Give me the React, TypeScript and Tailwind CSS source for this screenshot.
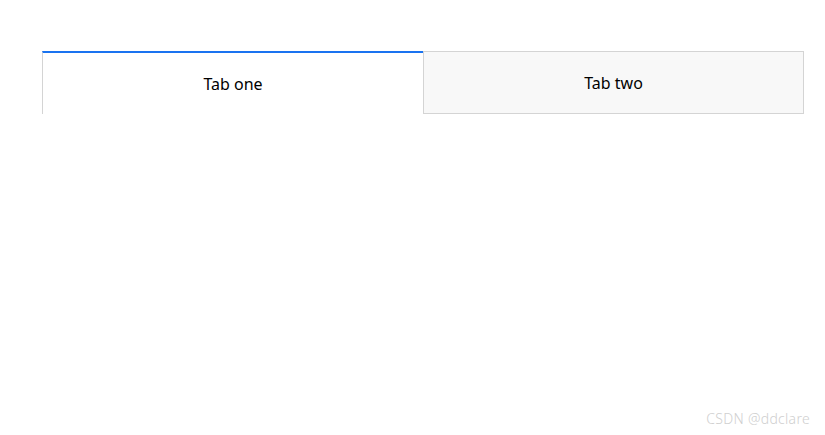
import { useState } from 'react';

const tabs = ['Tab one', 'Tab two'];

export default function App() {
  const [active, setActive] = useState(0);

  return (
    <div
      className="flex h-[435px] w-[825px] flex-col bg-white"
      style={{ fontFamily: '"Noto Sans", "Open Sans", sans-serif' }}
    >
      <div className="ml-[42px] mt-[51px] flex w-[762px]">
        {tabs.map((label, i) =>
          i === active ? (
            <button
              key={label}
              onClick={() => setActive(i)}
              className="flex h-[63px] w-[381px] items-center justify-center border-l border-t-2 border-l-[#d4d4d4] border-t-[#1a73f0] bg-white text-[16px] text-black"
            >
              {label}
            </button>
          ) : (
            <button
              key={label}
              onClick={() => setActive(i)}
              className="flex h-[63px] flex-1 items-center justify-center border border-[#d4d4d4] bg-[#f8f8f8] text-[16px] text-black"
            >
              {label}
            </button>
          )
        )}
      </div>
      <div className="mt-auto mb-[6px] mr-[15px] self-end text-[14px] font-light tracking-[0.3px] text-[#cfcfcf]">
        CSDN @ddclare
      </div>
    </div>
  );
}
